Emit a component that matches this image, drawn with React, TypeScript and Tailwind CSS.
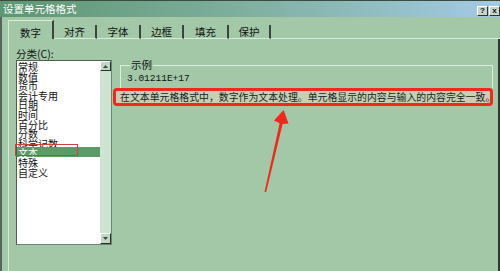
import React from "react";

const cjk = { fontFamily: '"Noto Sans CJK SC", "Noto Sans", sans-serif' };

const tabs = [
  { name: "数字", w: "w-[46px]", active: true },
  { name: "对齐", w: "w-[43px]" },
  { name: "字体", w: "w-[44px]" },
  { name: "边框", w: "w-[43px]" },
  { name: "填充", w: "w-[45px]" },
  { name: "保护", w: "w-[42px]" },
];

const categories = ["常规", "数值", "货币", "会计专用", "日期", "时间", "百分比", "分数", "科学记数", "文本", "特殊", "自定义"];

const App = () => {
  return (
    <div className="relative w-[500px] h-[271px] overflow-hidden bg-[#a3c8a7] text-[#111]" style={cjk}>
      {/* title bar */}
      <div className="h-[17px] flex items-center justify-between pl-[3px] border-t border-[#3c4a40] bg-linear-to-r from-[#5c9672] via-[#7fb0a0] to-[#a3cbe6]">
        <span className="text-[10.5px] leading-none text-white">设置单元格格式</span>
        <div className="flex gap-[1px] mt-[3px]">
          <div className="w-[11px] h-[10px] flex items-center justify-center bg-[#c6d6c8] border border-t-white border-l-white border-b-[#333] border-r-[#333] text-[8px] font-bold leading-none" style={{ fontFamily: '"Liberation Sans", sans-serif' }}>?</div>
          <div className="w-[11px] h-[10px] flex items-center justify-center bg-[#c6d6c8] border border-t-white border-l-white border-b-[#333] border-r-[#333] text-[8px] font-bold leading-none" style={{ fontFamily: '"Liberation Sans", sans-serif' }}>x</div>
        </div>
      </div>

      <div className="flex flex-col h-[254px] border-l-2 border-[#56665a] pl-[6px]">
        {/* tabs */}
        <div className="h-[22px] flex items-end">
          {tabs.map((t) => (
            <div
              key={t.name}
              className={`${t.w} flex items-center justify-center border-r-2 border-r-[#3a463c] ${t.active ? "h-[19px] border-t border-l border-t-[#d8eada] border-l-[#d8eada]" : "h-[14px] border-b border-b-[#d8eada]"}`}
            >
              <span className={`text-[10.5px] leading-none ${t.active ? "mt-[7px]" : "mt-[2px]"}`}>{t.name}</span>
            </div>
          ))}
          <div className="flex-1 border-b border-[#d8eada]" />
        </div>

        {/* pane */}
        <div className="flex-1 flex pl-[7px] pt-[8px] border-l border-[#d8eada] border-r-2 border-r-[#2e3a30]">
          {/* category list */}
          <div className="w-[96px] flex flex-col">
            <div className="text-[10.5px] leading-[13px]">分类(C):</div>
            <div className="h-[185px] flex border border-t-[#4e5e52] border-l-[#4e5e52] border-b-[#6e8474] border-r-[#6e8474]">
              <div className="flex-1 bg-white">
                {categories.map((c) => (
                  <div
                    key={c}
                    className={`relative h-[9.6px] pl-[1px] flex items-center whitespace-nowrap ${c === "文本" ? "bg-[#5c9a68] text-white" : ""}`}
                  >
                    <span className="relative top-[1px] text-[10px] leading-[9.6px]">{c}</span>
                    {c === "文本" && (
                      <span className="absolute -left-[2px] -top-[3px] w-[63px] h-[12px] border border-[#c4473d]" />
                    )}
                  </div>
                ))}
              </div>
              <div className="w-[11px] flex flex-col justify-between bg-[#cfe3d2]">
                <div className="h-[10px] flex items-center justify-center bg-[#c2d8c6] border border-t-white border-l-white border-b-[#26322a] border-r-[#26322a]">
                  <svg width="5" height="3" viewBox="0 0 5 3"><path d="M2.5 0L5 3H0z" fill="#3b4a3f" /></svg>
                </div>
                <div className="h-[11px] flex items-center justify-center bg-[#c2d8c6] border border-t-white border-l-white border-b-[#26322a] border-r-[#26322a]">
                  <svg width="5" height="3" viewBox="0 0 5 3"><path d="M0 0H5L2.5 3z" fill="#3b4a3f" /></svg>
                </div>
              </div>
            </div>
          </div>

          {/* sample */}
          <div className="w-[373px] ml-[8px] flex flex-col mt-[11px]">
            <fieldset className="border-t border-x border-[#dcecdd] pl-[6px] pt-[2px] pb-[4px]">
              <legend className="ml-[3px] px-[1px] text-[10.5px] leading-[14px]">示例</legend>
              <div className="text-[9.5px] leading-[10px]" style={{ fontFamily: '"Liberation Mono", monospace' }}>3.01211E+17</div>
            </fieldset>
            <div className="-ml-[7px] w-[380px] h-[18px] flex items-center px-[4px] border-[3px] border-[#f3271b] rounded-[4px] bg-[#c9ceb5] text-[9.9px] leading-[12px] whitespace-nowrap text-[#1c1c1c]">
              在文本单元格格式中，数字作为文本处理。单元格显示的内容与输入的内容完全一致。
            </div>
          </div>
        </div>
      </div>

      {/* annotation arrow */}
      <svg className="absolute left-0 top-0 pointer-events-none" width="500" height="271" viewBox="0 0 500 271">
        <polygon points="264.5,192 266.2,192 282.6,124 288.5,123.6 283.6,110 274,120.6 279.6,123.2" fill="#f3271b" />
      </svg>
    </div>
  );
};

export default App;
